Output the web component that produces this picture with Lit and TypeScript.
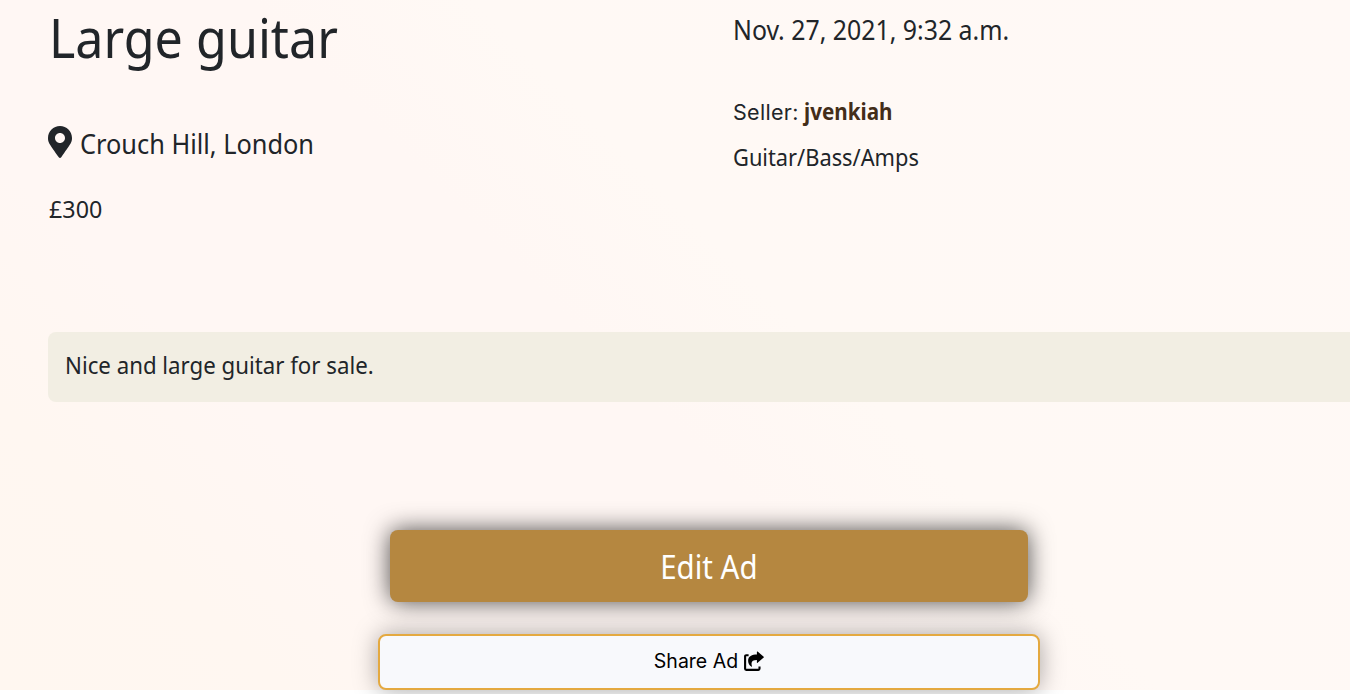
import { LitElement, html, css } from "lit";
import { customElement } from "lit/decorators.js";

@customElement("app-root")
export class AppRoot extends LitElement {
  static styles = css`
    :host {
      display: block;
      height: 694px;
      overflow: hidden;
      background: #fff;
      color: #212529;
      font-family: "Noto Sans", "Open Sans", sans-serif;
    }
    .page {
      box-sizing: border-box;
      height: 690px;
      background: linear-gradient(45deg, #fff7f0 0%, #fff7f1 14%, #fff7f4 26%, #fff7f4 46%, #fff9f5 57%, #fff9f6 100%);
    }
    .details {
      display: grid;
      grid-template-columns: 685px 1fr;
      height: 332px;
      padding-left: 48px;
      box-sizing: border-box;
    }
    .fit {
      display: inline-block;
      white-space: nowrap;
      transform-origin: 0 50%;
    }
    h1, p { margin: 0; font-weight: 400; }
    .title { padding-left: 1px; font-size: 54px; line-height: 74px; }
    .title .fit { transform: scaleX(0.93); }
    .location {
      display: flex;
      gap: 8px;
      margin-top: 52px;
      font-size: 28px;
      line-height: 34px;
    }
    .location .fit { transform: scaleX(0.905); }
    .marker { display: block; width: 24px; height: 32px; }
    .price { margin-top: 31px; padding-left: 1px; font-size: 24px; line-height: 36px; }
    .price .fit { transform: scaleX(0.97); }
    .date { margin-top: 12px; font-size: 28px; line-height: 34px; }
    .date .fit { transform: scaleX(0.888); }
    .seller {
      display: flex;
      align-items: baseline;
      margin-top: 47px;
      font-size: 24px;
      line-height: 36px;
    }
    .label {
      width: 71px;
      font-family: Inter, sans-serif;
      font-size: 21.5px;
      letter-spacing: 0.3px;
    }
    .name { color: #432d19; font-weight: 700; transform: scaleX(0.86); }
    .category { margin-top: 9px; font-size: 24px; line-height: 36px; }
    .category .fit { transform: scaleX(0.909); }
    .description {
      box-sizing: border-box;
      height: 70px;
      margin-left: 48px;
      padding: 15px 17px;
      border-radius: 8px 0 0 8px;
      background: #f2eee3;
      font-size: 24px;
      line-height: 36px;
    }
    .description .fit { transform: scaleX(0.927); }
    .actions {
      display: flex;
      flex-direction: column;
      align-items: center;
      gap: 32px;
      width: 662px;
      margin: 128px 0 0 378px;
    }
    button {
      display: flex;
      align-items: center;
      justify-content: center;
      box-sizing: border-box;
      margin: 0;
      padding: 0;
      border-radius: 8px;
    }
    .edit {
      width: 638px;
      height: 72px;
      padding-top: 2px;
      border: 0;
      background: #b58740;
      color: #fff;
      font: 400 32px/70px "Noto Sans", sans-serif;
      box-shadow: 0 0 24px rgba(0, 0, 0, 0.7);
    }
    .edit .fit { transform: scaleX(0.92); transform-origin: 50% 50%; }
    .share {
      gap: 6px;
      width: 662px;
      height: 56px;
      padding-bottom: 2px;
      border: 2px solid #e4a940;
      background: #f8f9fc;
      color: #000;
      font: 400 19.5px/50px Inter, sans-serif;
      box-shadow: 0 0 24px rgba(0, 0, 0, 0.35);
    }
    .share-icon { width: 20px; height: 20px; margin-bottom: 1px; }
  `;

  render() {
    return html`
      <main class="page">
        <section class="details">
          <div>
            <h1 class="title"><span class="fit">Large guitar</span></h1>
            <p class="location">
              <svg class="marker" viewBox="0 0 384 512" fill="currentColor" aria-hidden="true">
                <path d="M172.268 501.67C26.97 291.031 0 269.413 0 192 0 85.961 85.961 0 192 0s192 85.961 192 192c0 77.413-26.97 99.031-172.268 309.67-9.535 13.774-29.93 13.773-39.464 0zM192 272c44.183 0 80-35.817 80-80s-35.817-80-80-80-80 35.817-80 80 35.817 80 80 80z"/>
              </svg>
              <span class="fit">Crouch Hill, London</span>
            </p>
            <p class="price"><span class="fit">£300</span></p>
          </div>
          <div>
            <p class="date"><span class="fit">Nov. 27, 2021, 9:32 a.m.</span></p>
            <p class="seller"><span class="label">Seller:</span><span class="fit name">jvenkiah</span></p>
            <p class="category"><span class="fit">Guitar/Bass/Amps</span></p>
          </div>
        </section>
        <section class="description"><span class="fit">Nice and large guitar for sale.</span></section>
        <div class="actions">
          <button class="edit"><span class="fit">Edit Ad</span></button>
          <button class="share">
            <span>Share Ad</span>
            <svg class="share-icon" viewBox="0 0 20 20" aria-hidden="true">
              <path d="M4.6 4.2H2.2Q1.1 4.2 1.1 5.3V17.8Q1.1 18.9 2.2 18.9H14.4Q15.5 18.9 15.5 17.8V15.4" fill="none" stroke="currentColor" stroke-width="2.1"/>
              <path d="M13.6 0.6L19.7 5.8Q20.1 6.2 19.7 6.6L13.6 11.8Q12.9 12.3 12.9 11.4V8.9C8.6 8.9 6.6 10.3 7.9 15.1Q8.1 16.2 7.2 15.6C5.4 14.3 4.1 12.2 4.1 9.7C4.1 5 8.1 3.5 12.9 3.4V1Q12.9 0.1 13.6 0.6Z" fill="currentColor"/>
            </svg>
          </button>
        </div>
      </main>
    `;
  }
}
